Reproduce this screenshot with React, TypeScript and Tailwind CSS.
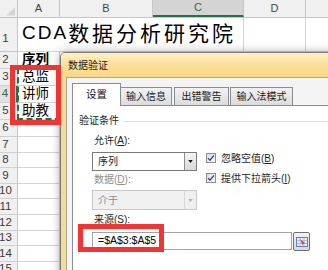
const sheetFont = "font-['Liberation_Sans','Noto_Sans_CJK_SC',sans-serif]";

const cols = [
  { id: "A", w: "w-[42px]" },
  { id: "B", w: "w-[93px]" },
  { id: "C", w: "w-[91px]", active: true },
  { id: "D", w: "w-[62px]" },
];

const rows: { n: number; h: string; text?: string; bold?: boolean; active?: boolean }[] = [
  { n: 2, h: "h-[17px]", text: "序列", bold: true },
  { n: 3, h: "h-[17px]", text: "总监" },
  { n: 4, h: "h-[17px]", text: "讲师", active: true },
  { n: 5, h: "h-[17px]", text: "助教" },
  { n: 6, h: "h-[17px]" },
  ...[7, 8, 9, 10, 11, 12, 13, 14, 15].map((n) => ({ n, h: "h-[15.6px]" })),
];

function RowHead({ n, active }: { n: number; active?: boolean }) {
  return (
    <div
      className={`flex w-[18px] shrink-0 items-center justify-center border-b border-[#d0d0d0] pr-[6px] text-[11.5px] leading-none ${
        active ? "border-r-2 border-r-[#217346] bg-[#e1e1e1] text-[#217346]" : "border-r border-r-[#c6c6c6] bg-[#f0f0f0] text-[#3c3c3c]"
      }`}
    >
      {n}
    </div>
  );
}

function Sheet() {
  return (
    <div className={sheetFont}>
      {/* column headers */}
      <div className="flex h-[18px] border-b border-[#c6c6c6] bg-[#f0f0f0] text-[11px] text-[#444]">
        <div className="relative w-[18px] shrink-0 border-r border-[#c6c6c6]">
          <svg viewBox="0 0 18 18" className="absolute inset-0 h-[18px] w-[18px]">
            <polygon points="15,7 15,15.5 6.5,15.5" fill="#d6d6d6" />
          </svg>
        </div>
        {cols.map((c) => (
          <div
            key={c.id}
            className={`flex ${c.w} shrink-0 items-center justify-center border-r border-[#c6c6c6] ${
              c.active ? "border-b-2 border-b-[#217346] bg-[#d4d4d4] text-[#217346]" : ""
            }`}
          >
            {c.id}
          </div>
        ))}
        <div className="flex-1" />
      </div>

      {/* row 1 */}
      <div className="flex h-[34px]">
        <div className="flex w-[18px] shrink-0 items-end justify-center border-b border-r border-[#c6c6c6] bg-[#f0f0f0] pb-[7px] pr-[6px] text-[11.5px] leading-none text-[#3c3c3c]">
          1
        </div>
        <div className="flex w-[226px] shrink-0 items-start border-b border-r border-[#d4d4d4] pl-[4px] pt-[5px] leading-none text-black">
          <span className="text-[19px] tracking-[2px]">CDA</span>
          <span className="text-[21px] tracking-[3px]">数据分析研究院</span>
        </div>
        <div className="w-[62px] shrink-0 border-b border-r border-[#d4d4d4]" />
        <div className="flex-1 border-b border-[#d4d4d4]" />
      </div>

      {rows.map((r) => (
        <div key={r.n} className={`flex ${r.h}`}>
          <RowHead n={r.n} active={r.active} />
          <div
            className={`flex w-[42px] shrink-0 items-end overflow-visible whitespace-nowrap border-b border-r border-[#d4d4d4] pl-[4px] leading-[16px] text-black ${
              r.bold ? "text-[13.5px] font-bold" : "text-[13.5px]"
            }`}
          >
            {r.text}
          </div>
          <div className="w-[93px] shrink-0 border-b border-r border-[#d4d4d4]" />
          <div className="flex-1 border-b border-[#d4d4d4]" />
        </div>
      ))}
    </div>
  );
}

function Caret({ disabled }: { disabled?: boolean }) {
  return (
    <svg viewBox="0 0 6 4" className="h-[3px] w-[5px]">
      <polygon points="0,0 6,0 3,4" fill={disabled ? "#b4b4b4" : "#111"} />
    </svg>
  );
}

function Check() {
  return (
    <span className="flex h-[10px] w-[10px] shrink-0 items-center justify-center border border-[#8f8f8f] bg-gradient-to-br from-[#dcdcdc] to-[#fafafa]">
      <svg viewBox="0 0 10 10" className="h-[8px] w-[8px]">
        <path d="M1.3 5.2 L3.7 7.8 L8.7 1.6" fill="none" stroke="#2a4594" strokeWidth="1.6" />
      </svg>
    </span>
  );
}

function RefIcon() {
  return (
    <svg viewBox="0 0 12 12" className="h-[12px] w-[12px]">
      <rect x="0.5" y="1.5" width="11" height="9" fill="#e6eefa" stroke="#5b7fc2" />
      <path d="M1 4.5h10M1 7.5h10M4 2v8M8 2v8" stroke="#9fb7df" strokeWidth="0.8" />
      <path d="M3.8 3 L9.6 7.4 L7.4 7.6 L7 9.8 Z" fill="#e0392b" />
    </svg>
  );
}

function Dialog() {
  const tab = "flex h-[18px] shrink-0 items-center justify-center border border-b-0 border-[#898c95] bg-gradient-to-b from-[#f2f2f2] to-[#dcdcdc] text-[10px] text-[#1a1a1a]";
  return (
    <div className="absolute left-[60px] top-[52px] h-[240px] w-[300px] rounded-tl-[5px] border border-[#7b7b7b] bg-[#f8dc8e] shadow-[0_0_10px_rgba(0,0,0,0.35)]">
      <div className="flex h-[24px] items-center rounded-tl-[4px] bg-gradient-to-b from-[#fff0c6] via-[#fce09a] to-[#f9d785] pl-[7px] text-[10px] text-[#222]">
        数据验证
      </div>
      <div className="ml-[5px] flex h-full flex-col border-l border-t border-[#a9a9a9] bg-[#f4f4f4] pl-[5px] pt-[5px]">
        {/* tabs */}
        <div className="flex items-end">
          <div className="relative z-10 -mb-px flex h-[23px] w-[49px] shrink-0 items-center justify-center border border-b-0 border-[#898c95] bg-white text-[10.5px] text-[#111]">
            设置
          </div>
          <div className={`${tab} w-[51px] border-l-0`}>输入信息</div>
          <div className={`${tab} ml-[2px] w-[55px]`}>出错警告</div>
          <div className={`${tab} ml-px w-[63px]`}>输入法模式</div>
        </div>

        {/* panel */}
        <div className="flex-1 border-l border-t border-[#898c95] bg-white pl-[6px] pt-[8px] text-[10px] text-[#1e1e1e]">
          <div className="flex h-[14px] items-center gap-[5px] leading-[14px]">
            <span>验证条件</span>
            <div className="h-px flex-1 bg-[#d5dfe5]" />
          </div>

          <div className="pl-[13px]">
            <div className="flex gap-[9px]">
              <div className="flex w-[105px] shrink-0 flex-col">
                <div className="mt-[6px] h-[14px] pl-[2px] leading-[14px]">
                  允许(<u>A</u>):
                </div>
                <div className="mt-[4px] flex h-[19px] items-stretch border border-[#7a7a7a] bg-white">
                  <span className="flex flex-1 items-center pl-[5px]">序列</span>
                  <span className="flex w-[12px] items-center justify-center border-l border-[#8e8e8e] bg-gradient-to-b from-[#f4f4f4] to-[#d9d9d9]">
                    <Caret />
                  </span>
                </div>
                <div className="mt-[2px] h-[14px] pl-[2px] leading-[14px] text-[#8d8d8d]">
                  数据(<u>D</u>):
                </div>
                <div className="mt-[3px] flex h-[20px] items-stretch border border-[#c9c9c9] bg-[#f0f0f0] text-[#8d8d8d]">
                  <span className="flex flex-1 items-center pl-[5px]">介于</span>
                  <span className="flex w-[12px] items-center justify-center border-l border-[#d6d6d6]">
                    <Caret disabled />
                  </span>
                </div>
                <div className="mt-[3px] h-[14px] pl-[2px] leading-[14px]">
                  来源(<u>S</u>):
                </div>
              </div>

              <div className="flex flex-col gap-[10px] pt-[25px]">
                <label className="flex h-[10px] items-center gap-[5px] whitespace-nowrap">
                  <Check />
                  <span>
                    忽略空值(<u>B</u>)
                  </span>
                </label>
                <label className="flex h-[10px] items-center gap-[5px] whitespace-nowrap">
                  <Check />
                  <span>
                    提供下拉箭头(<u>I</u>)
                  </span>
                </label>
              </div>
            </div>

            <div className="mt-[5px] flex items-start">
              <div className="flex h-[18px] w-[200px] items-center border border-[#a3a3a3] bg-white pl-[5px] text-[10.5px] text-black">
                =$A$3:$A$5
              </div>
              <div className="ml-px flex h-[19px] w-[17px] items-center justify-center rounded-[2px] border border-[#707070] bg-gradient-to-b from-[#f3f3f3] to-[#d8d8d8]">
                <RefIcon />
              </div>
            </div>
          </div>
        </div>
      </div>
    </div>
  );
}

export default function App() {
  return (
    <div className={`relative h-[270px] w-[328px] overflow-hidden bg-white ${sheetFont}`}>
      <Sheet />
      {/* copy marquee around A3:A5 */}
      <div className="absolute left-[17px] top-[68px] h-[52px] w-[44px] border-2 border-dashed border-[#217346]" />
      <Dialog />
      <div className="absolute left-[10px] top-[65px] h-[60px] w-[51px] border-[5px] border-[#f03535]" />
      <div className="absolute left-[78px] top-[224px] h-[28px] w-[86px] border-[5px] border-[#f03535]" />
    </div>
  );
}
